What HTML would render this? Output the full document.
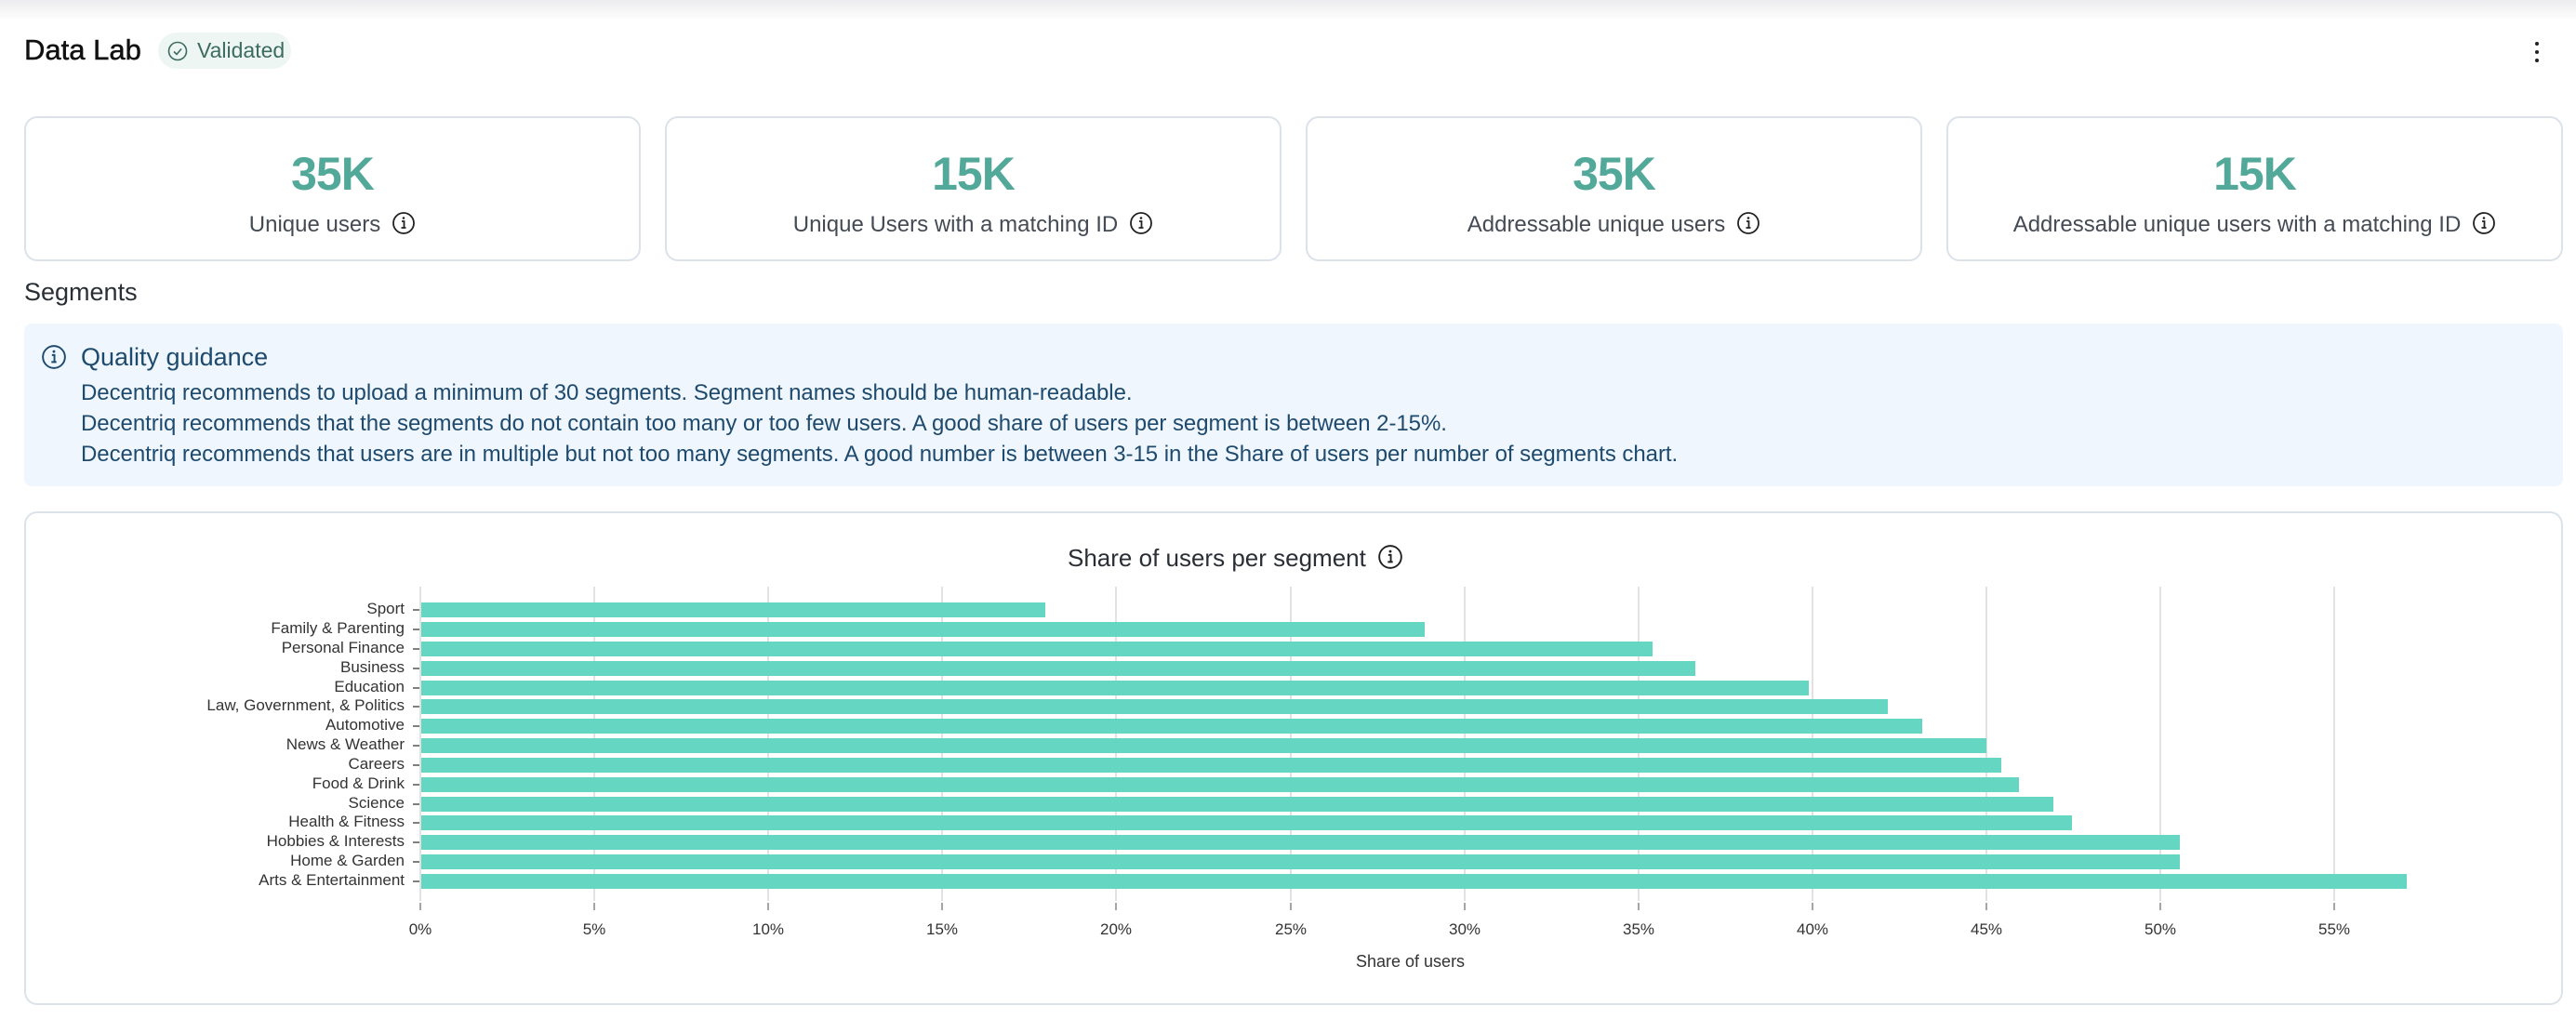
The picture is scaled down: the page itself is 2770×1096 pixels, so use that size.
<!DOCTYPE html>
<html><head><meta charset="utf-8"><style>
*{margin:0;padding:0;box-sizing:border-box}
body{width:2770px;height:1096px;background:#fff;font-family:"Liberation Sans",sans-serif;position:relative;overflow:hidden;color:#1f2329}
.topshade{position:absolute;left:0;top:0;width:2770px;height:22px;background:linear-gradient(#ececee,#fff)}
.abs{position:absolute}
.card{position:absolute;top:125px;width:663px;height:156px;border:2px solid #dce2ea;border-radius:14px;text-align:center}
.card .num{position:absolute;left:0;right:0;top:31px;font-size:50px;font-weight:bold;color:#52a999;letter-spacing:-1px}
.card .lab{position:absolute;left:0;right:0;top:101px;font-size:24px;color:#444b55}
.info{display:inline-block;vertical-align:middle;margin-left:12px;margin-top:-6px}
.g{font-size:24px;color:#1e4a6e;position:absolute;left:87px;letter-spacing:-0.05px}
.yl{position:absolute;right:2335px;font-size:17px;color:#333;text-align:right;white-space:nowrap}
.xl{position:absolute;top:990px;font-size:17px;color:#333;width:60px;margin-left:-30px;text-align:center}
</style></head><body>
<div class="topshade"></div>
<div class="abs" style="left:26px;top:36px;font-size:31px;font-weight:500;color:#111;-webkit-text-stroke:0.5px #111">Data Lab</div>
<div class="abs" style="left:170px;top:35px;width:143px;height:39px;border-radius:20px;background:#eef6f4;font-size:23px;color:#3d6b5f;line-height:39px;padding-left:42px">Validated
<svg class="abs" style="left:10px;top:9px" width="22" height="22" viewBox="0 0 22 22"><circle cx="11" cy="11" r="9.5" fill="none" stroke="#3d6b5f" stroke-width="1.6"/><path d="M7 11.5l3 3 5-6" fill="none" stroke="#3d6b5f" stroke-width="1.6"/></svg></div>
<svg class="abs" style="left:2722px;top:42px" width="12" height="28"><circle cx="6" cy="5" r="2" fill="#222"/><circle cx="6" cy="14" r="2" fill="#222"/><circle cx="6" cy="23" r="2" fill="#222"/></svg>

<div class="card" style="left:26px"><div class="num">35K</div><div class="lab">Unique users<svg class="info" width="26" height="26" viewBox="0 0 26 26"><circle cx="13" cy="13" r="11" fill="none" stroke="#222" stroke-width="1.8"/><path d="M11 11h2.5v7M10.5 18h5" fill="none" stroke="#222" stroke-width="1.8"/><circle cx="13" cy="7.5" r="1.3" fill="#222"/></svg></div></div>
<div class="card" style="left:715px"><div class="num">15K</div><div class="lab">Unique Users with a matching ID<svg class="info" width="26" height="26" viewBox="0 0 26 26"><circle cx="13" cy="13" r="11" fill="none" stroke="#222" stroke-width="1.8"/><path d="M11 11h2.5v7M10.5 18h5" fill="none" stroke="#222" stroke-width="1.8"/><circle cx="13" cy="7.5" r="1.3" fill="#222"/></svg></div></div>
<div class="card" style="left:1404px"><div class="num">35K</div><div class="lab">Addressable unique users<svg class="info" width="26" height="26" viewBox="0 0 26 26"><circle cx="13" cy="13" r="11" fill="none" stroke="#222" stroke-width="1.8"/><path d="M11 11h2.5v7M10.5 18h5" fill="none" stroke="#222" stroke-width="1.8"/><circle cx="13" cy="7.5" r="1.3" fill="#222"/></svg></div></div>
<div class="card" style="left:2093px"><div class="num">15K</div><div class="lab">Addressable unique users with a matching ID<svg class="info" width="26" height="26" viewBox="0 0 26 26"><circle cx="13" cy="13" r="11" fill="none" stroke="#222" stroke-width="1.8"/><path d="M11 11h2.5v7M10.5 18h5" fill="none" stroke="#222" stroke-width="1.8"/><circle cx="13" cy="7.5" r="1.3" fill="#222"/></svg></div></div>

<div class="abs" style="left:26px;top:299px;font-size:27px;color:#2a2f36">Segments</div>

<div class="abs" style="left:26px;top:348px;width:2730px;height:175px;background:#eff6fd;border-radius:8px">
<svg class="abs" style="left:18px;top:22px" width="28" height="28" viewBox="0 0 26 26"><circle cx="13" cy="13" r="11" fill="none" stroke="#1e4a6e" stroke-width="1.8"/><path d="M11 11h2.5v7M10.5 18h5" fill="none" stroke="#1e4a6e" stroke-width="1.8"/><circle cx="13" cy="7.5" r="1.3" fill="#1e4a6e"/></svg>
<div class="abs" style="left:61px;top:21px;font-size:27px;color:#1e4a6e">Quality guidance</div>
<div class="g" style="left:61px;top:61px">Decentriq recommends to upload a minimum of 30 segments. Segment names should be human-readable.</div>
<div class="g" style="left:61px;top:94px">Decentriq recommends that the segments do not contain too many or too few users. A good share of users per segment is between 2-15%.</div>
<div class="g" style="left:61px;top:127px">Decentriq recommends that users are in multiple but not too many segments. A good number is between 3-15 in the Share of users per number of segments chart.</div>
</div>

<div class="abs" style="left:26px;top:550px;width:2730px;height:531px;border:2px solid #dce2ea;border-radius:14px"></div>
<div class="abs" style="left:1148px;top:585px;font-size:26px;color:#2a2f36">Share of users per segment<svg class="info" width="28" height="28" viewBox="0 0 26 26"><circle cx="13" cy="13" r="11" fill="none" stroke="#222" stroke-width="1.8"/><path d="M11 11h2.5v7M10.5 18h5" fill="none" stroke="#222" stroke-width="1.8"/><circle cx="13" cy="7.5" r="1.3" fill="#222"/></svg></div>

<svg class="abs" style="left:0;top:0" width="2770" height="1096">
<g stroke="#e2e2e2" stroke-width="2">
<line x1="452" y1="631" x2="452" y2="969"/><line x1="639" y1="631" x2="639" y2="969"/><line x1="826" y1="631" x2="826" y2="969"/><line x1="1013" y1="631" x2="1013" y2="969"/><line x1="1200" y1="631" x2="1200" y2="969"/><line x1="1388" y1="631" x2="1388" y2="969"/><line x1="1575" y1="631" x2="1575" y2="969"/><line x1="1762" y1="631" x2="1762" y2="969"/><line x1="1949" y1="631" x2="1949" y2="969"/><line x1="2136" y1="631" x2="2136" y2="969"/><line x1="2323" y1="631" x2="2323" y2="969"/><line x1="2510" y1="631" x2="2510" y2="969"/>
</g>
<g stroke="#888" stroke-width="1.5">
<line x1="452" y1="971" x2="452" y2="979"/><line x1="639" y1="971" x2="639" y2="979"/><line x1="826" y1="971" x2="826" y2="979"/><line x1="1013" y1="971" x2="1013" y2="979"/><line x1="1200" y1="971" x2="1200" y2="979"/><line x1="1388" y1="971" x2="1388" y2="979"/><line x1="1575" y1="971" x2="1575" y2="979"/><line x1="1762" y1="971" x2="1762" y2="979"/><line x1="1949" y1="971" x2="1949" y2="979"/><line x1="2136" y1="971" x2="2136" y2="979"/><line x1="2323" y1="971" x2="2323" y2="979"/><line x1="2510" y1="971" x2="2510" y2="979"/>
</g>
<g fill="#64d6c1">
<rect x="453" y="648" width="671" height="16"/>
<rect x="453" y="669" width="1079" height="16"/>
<rect x="453" y="690" width="1324" height="16"/>
<rect x="453" y="711" width="1370" height="16"/>
<rect x="453" y="732" width="1492" height="16"/>
<rect x="453" y="752" width="1577" height="16"/>
<rect x="453" y="773" width="1614" height="16"/>
<rect x="453" y="794" width="1683" height="16"/>
<rect x="453" y="815" width="1699" height="16"/>
<rect x="453" y="836" width="1718" height="16"/>
<rect x="453" y="857" width="1755" height="16"/>
<rect x="453" y="877" width="1775" height="16"/>
<rect x="453" y="898" width="1891" height="16"/>
<rect x="453" y="919" width="1891" height="16"/>
<rect x="453" y="940" width="2135" height="16"/>
</g>
<g stroke="#555" stroke-width="1.5">
<line x1="444" y1="656" x2="451" y2="656"/><line x1="444" y1="677" x2="451" y2="677"/><line x1="444" y1="698" x2="451" y2="698"/><line x1="444" y1="719" x2="451" y2="719"/><line x1="444" y1="740" x2="451" y2="740"/><line x1="444" y1="760" x2="451" y2="760"/><line x1="444" y1="781" x2="451" y2="781"/><line x1="444" y1="802" x2="451" y2="802"/><line x1="444" y1="823" x2="451" y2="823"/><line x1="444" y1="844" x2="451" y2="844"/><line x1="444" y1="865" x2="451" y2="865"/><line x1="444" y1="885" x2="451" y2="885"/><line x1="444" y1="906" x2="451" y2="906"/><line x1="444" y1="927" x2="451" y2="927"/><line x1="444" y1="948" x2="451" y2="948"/>
</g>
</svg>
<div class="yl" style="top:645px">Sport</div>
<div class="yl" style="top:666px">Family &amp; Parenting</div>
<div class="yl" style="top:687px">Personal Finance</div>
<div class="yl" style="top:708px">Business</div>
<div class="yl" style="top:729px">Education</div>
<div class="yl" style="top:749px">Law, Government, &amp; Politics</div>
<div class="yl" style="top:770px">Automotive</div>
<div class="yl" style="top:791px">News &amp; Weather</div>
<div class="yl" style="top:812px">Careers</div>
<div class="yl" style="top:833px">Food &amp; Drink</div>
<div class="yl" style="top:854px">Science</div>
<div class="yl" style="top:874px">Health &amp; Fitness</div>
<div class="yl" style="top:895px">Hobbies &amp; Interests</div>
<div class="yl" style="top:916px">Home &amp; Garden</div>
<div class="yl" style="top:937px">Arts &amp; Entertainment</div>
<div class="xl" style="left:452px">0%</div><div class="xl" style="left:639px">5%</div><div class="xl" style="left:826px">10%</div><div class="xl" style="left:1013px">15%</div><div class="xl" style="left:1200px">20%</div><div class="xl" style="left:1388px">25%</div><div class="xl" style="left:1575px">30%</div><div class="xl" style="left:1762px">35%</div><div class="xl" style="left:1949px">40%</div><div class="xl" style="left:2136px">45%</div><div class="xl" style="left:2323px">50%</div><div class="xl" style="left:2510px">55%</div>
<div class="abs" style="left:1458px;top:1024px;font-size:18px;color:#333">Share of users</div>
</body></html>
